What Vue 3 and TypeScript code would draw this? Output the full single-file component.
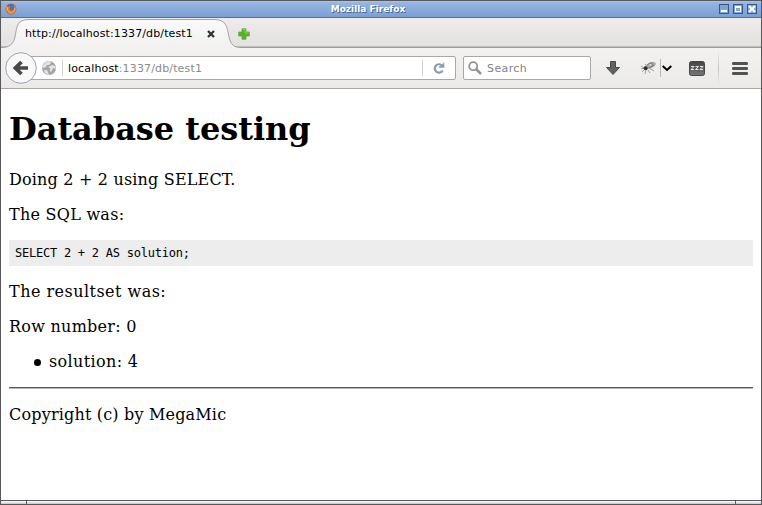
<script setup lang="ts">
const host = 'localhost'
const path = ':1337/db/test1'
const rows = [{ id: 0, fields: [{ name: 'solution', value: 4 }] }]
</script>

<template>
  <div class="window">
    <header class="titlebar">
      <svg class="fox" width="12" height="12" viewBox="0 0 12 12">
        <circle cx="6" cy="6" r="5.4" fill="#bd5a2c" />
        <circle cx="6.3" cy="4.6" r="3.6" fill="#4a72b8" />
        <path d="M1 2 3 3.5 5 4 4.5 6C5 8 8 8 9 6L9 2 11 4V8L8 11H4L1 8Z" fill="#e67b25" />
        <path d="M2 4 3 8 6 10 9 8 10 5" fill="none" stroke="#f5b35e" stroke-width="1" />
      </svg>
      <span class="caption">Mozilla Firefox</span>
      <div class="controls">
        <svg width="10" height="10" viewBox="0 0 10 10"><rect x=".5" y=".5" width="9" height="9" fill="#7fa4d7" stroke="#345987" /><path d="M2 7h6" stroke="#fff" stroke-width="2" /></svg>
        <svg width="10" height="10" viewBox="0 0 10 10"><rect x=".5" y=".5" width="9" height="9" fill="#7fa4d7" stroke="#345987" /><path d="M2 2h6v6H2Z M3 4v3h4V4Z" fill="#fff" fill-rule="evenodd" /></svg>
        <svg width="10" height="10" viewBox="0 0 10 10"><rect x=".5" y=".5" width="9" height="9" fill="#7fa4d7" stroke="#345987" /><path d="m2 2 6 6M8 2 2 8" stroke="#fff" stroke-width="2.3" /></svg>
      </div>
    </header>

    <div class="tabs">
      <svg class="tab-shape" width="240" height="30" viewBox="0 0 240 30">
        <defs><linearGradient id="tab" x2="0" y2="1"><stop stop-color="#fafafa" /><stop offset="1" stop-color="#f2f1f0" /></linearGradient></defs>
        <path d="M0 30V29.5C8 29.5 12 27 14 19C16 8 16 1.5 28 1.5H213C225 1.5 226 8 228 19C230 27 233 29.5 240 29.5V30Z" fill="url(#tab)" />
        <path d="M0 29.5C8 29.5 12 27 14 19C16 8 16 1.5 28 1.5H213C225 1.5 226 8 228 19C230 27 233 29.5 240 29.5" fill="none" stroke="#a2a5a8" />
      </svg>
      <span class="tab-title">http://{{ host }}{{ path }}</span>
      <svg class="tab-close" width="8" height="8" viewBox="0 0 8 8"><path d="m1 1 6 6M7 1 1 7" stroke="#303030" stroke-width="2.2" /></svg>
      <svg class="plus" width="12" height="12" viewBox="0 0 12 12"><path d="M4 .8h4V4h3.3v4H8v3.3H4V8H.7V4H4Z" fill="#55b51f" stroke="#6a9f50" stroke-width=".8" /><path d="M5 1.5h2V5h3.5" fill="none" stroke="#83d550" /></svg>
    </div>

    <nav class="toolbar">
      <svg class="back" width="32" height="32" viewBox="0 0 32 32"><circle cx="16" cy="16" r="15.3" fill="#f9f9f9" stroke="#98a5b2" /><path d="m16.5 10-6.2 6 6.2 6M11 16h12" fill="none" stroke="#484848" stroke-width="3.7" /></svg>
      <div class="address">
        <svg class="globe" width="14" height="14" viewBox="0 0 14 14"><circle cx="7" cy="7" r="7" fill="#a5a5a5" /><path d="M4 1 8 0 9 2 7 4 5 4 4 6 1 7 0 5ZM10 4l3 1 1 3-3-1-1 3-2 1V7l-2-1ZM2 9l3 0 1 2 1 3-4-2Z" fill="#e3e3e3" /></svg>
        <i class="divider"></i>
        <span class="url"><b>{{ host }}</b>{{ path }}</span>
        <i class="divider"></i>
        <svg class="reload" width="12" height="12" viewBox="0 0 12 12"><path d="M9 3.5A4.2 4.2 0 1 0 9.7 8.4" fill="none" stroke="#899cab" stroke-width="2.2" /><path d="M11.3 0v5.8H6V4.3L8 4Z" fill="#899cab" /></svg>
      </div>
      <div class="search">
        <svg width="14" height="14" viewBox="0 0 14 14"><circle cx="5.2" cy="5.2" r="4" fill="none" stroke="#929292" stroke-width="1.8" /><path d="m8 8 5 5" stroke="#929292" stroke-width="2.5" /></svg>
        <span>Search</span>
      </div>
      <svg class="download" width="14" height="14" viewBox="0 0 14 14"><path d="M4.5.5h5v6h4L7 13.5.5 6.5h4Z" fill="#606362" stroke="#464948" /></svg>
      <svg class="bug" width="17" height="14" viewBox="0 0 17 14"><path d="M1 5 4 7 1 8M4 9 2 11M6 9 5 13M8 9l2 3M9 7l5 3M7 5 5 3" fill="none" stroke="#999" stroke-width=".9" /><path d="M5 5 9 2 13 .8 16 2 15 5 10 8 6 8Z" fill="#aaa" /><path d="m7 4 4-2.5M9 7l5-3M12 1.5v3" stroke="#727272" /><circle cx="5.6" cy="7.2" r="2" fill="#303030" /><circle cx="10.5" cy="4" r="1" fill="#e4e4e4" /></svg>
      <i class="bug-divider"></i>
      <svg class="chevron" width="10" height="7" viewBox="0 0 10 7"><path d="m.7 1 4.3 4L9.3 1" fill="none" stroke="#000" stroke-width="2" /></svg>
      <div class="sleep"><svg width="16" height="15" viewBox="0 0 16 15"><defs><linearGradient id="slp" x2="0" y2="1"><stop stop-color="#444" /><stop offset="1" stop-color="#777" /></linearGradient></defs><rect x=".5" y=".5" width="15" height="14" rx="2" fill="url(#slp)" stroke="#464646" /><path d="M2 5.5h3L2 8.5h3M6.5 5.5h3l-3 3h3M11 5.5h3l-3 3h3" fill="none" stroke="#e4e4e4" /></svg></div>
      <i class="menu-divider"></i>
      <svg class="menu" width="16" height="13" viewBox="0 0 16 13"><path d="M1.2 1.5h13.6M1.2 6.5h13.6M1.2 11.5h13.6" stroke="#505352" stroke-width="2.8" stroke-linecap="round" /></svg>
    </nav>

    <main class="page">
      <h1>Database testing</h1>
      <p class="intro">Doing 2 + 2 using SELECT.</p>
      <p>The SQL was:</p>
      <pre>SELECT 2 + 2 AS solution;</pre>
      <p class="result">The resultset was:</p>
      <template v-for="row in rows" :key="row.id">
        <p>Row number: {{ row.id }}</p>
        <ul><li v-for="f in row.fields" :key="f.name">{{ f.name }}: {{ f.value }}</li></ul>
      </template>
      <div class="rule"></div>
      <p class="copyright">Copyright (c) by MegaMic</p>
    </main>
    <footer class="grip"><i></i><i></i><i></i></footer>
  </div>
</template>

<style>
body { margin: 0; overflow: hidden; }
</style>

<style scoped>
* { box-sizing: border-box; }
svg { display: block; flex: none; }
i { display: block; flex: none; }
.window { width: 762px; height: 505px; border: 1px solid #58585c; background: #fff; display: flex; flex-direction: column; font-family: "DejaVu Sans", sans-serif; overflow: hidden; }
.titlebar { height: 17px; flex: none; background: linear-gradient(#a9c5ec 0, #94b5e2 2px, #7b9fd1 100%); border-bottom: 1px solid #4b72a8; display: grid; grid-template-columns: 16px 1fr 42px; align-items: center; }
.fox { margin-left: 4px; }
.caption { color: #fff; text-align: center; font-weight: bold; font-size: 9px; line-height: 14px; text-shadow: 1px 1px #49658c; }
.controls { display: flex; gap: 4px; }
.tabs { height: 30px; flex: none; background: linear-gradient(#edecea, #e3e2e0 28px, #9e9c9a 29px); display: grid; grid-template-columns: 24px 182px 31px 1fr; align-items: center; }
.tab-shape { grid-column: 1 / -1; grid-row: 1; }
.tab-title { grid-column: 2; grid-row: 1; font-size: 11px; letter-spacing: .12px; white-space: nowrap; color: #000; z-index: 1; }
.tab-close { grid-column: 3; grid-row: 1; z-index: 1; margin-top: 1px; }
.plus { grid-column: 4; grid-row: 1; z-index: 1; margin-top: 1px; }
.toolbar { height: 41px; flex: none; background: linear-gradient(#f3f2f1, #ebeae8); border-bottom: 1px solid #aaa6a3; display: flex; align-items: center; }
.back { margin-left: 4px; z-index: 1; }
.address { width: 432px; height: 24px; margin-left: -13px; border: 1px solid #aaa8a6; border-radius: 0 2px 2px 0; background: #fff; display: flex; align-items: center; font-size: 11px; }
.globe { margin-left: 17px; }
.divider { width: 1px; height: 16px; background: #d0d0d0; }
.globe + .divider { margin-left: 6px; }
.url { flex: 1; margin-left: 5px; color: #8b8b8b; letter-spacing: .15px; }
.url b { font-weight: normal; color: #000; }
.reload { margin: 0 10px 0 10px; }
.search { width: 128px; height: 24px; margin-left: 7px; border: 1px solid #aaa8a6; border-radius: 2px; background: #fff; display: flex; align-items: center; gap: 5px; padding-left: 4px; color: #828282; font-size: 11px; letter-spacing: .4px; }
.download { margin-left: 15px; }
.bug { margin-left: 20px; }
.bug-divider { width: 1px; height: 18px; background: #bbb; margin-left: 3px; }
.chevron { margin-left: 1px; }
.sleep { margin-left: 17px; }
.menu-divider { width: 1px; height: 36px; margin-left: 13px; background: linear-gradient(transparent, #c5c3c1, transparent); }
.menu { margin-left: 13px; }
.page { flex: 1; padding: 0 8px; font-family: "DejaVu Serif", serif; font-size: 16px; line-height: 19px; letter-spacing: .26px; color: #000; }
h1 { margin: 21px 0 22px; font-size: 32px; line-height: 38px; font-weight: bold; letter-spacing: -.05px; white-space: nowrap; }
p { margin: 16px 0; }
.intro, .copyright { letter-spacing: .18px; }
.result { letter-spacing: .47px; }
pre { margin: 16px 0; height: 26px; padding: 6px; background: #ededed; font-family: "DejaVu Sans Mono", monospace; font-size: 12px; line-height: 14px; letter-spacing: -.24px; }
ul { margin: 16px 0; padding-left: 40px; list-style: none; }
li { display: flex; align-items: center; letter-spacing: .36px; }
li::before { content: ""; width: 7px; height: 7px; margin: 2px 8px 0 -15px; border-radius: 50%; background: #000; }
.rule { height: 2px; background: #58585c; border-bottom: 1px solid #b9b9b9; margin: 16px 0; }
.grip { height: 4px; flex: none; border-top: 1px solid #58585c; display: grid; grid-template-columns: 25px 1fr 26px; background: linear-gradient(#fff, #c8c8cd); }
.grip i + i { border-left: 1px solid #58585c; }
</style>
